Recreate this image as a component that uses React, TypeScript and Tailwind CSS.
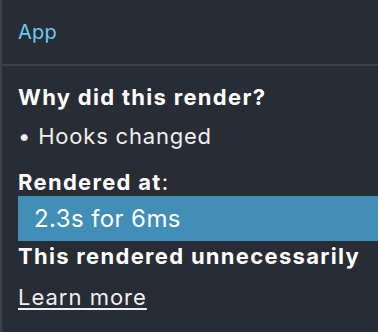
export default function App() {
  return (
    <div
      className="w-[378px] h-[332px] bg-[#282c34] border-l-2 border-[#3d424a] text-white overflow-hidden"
      style={{ fontFamily: "Inter, 'Noto Sans', sans-serif" }}
    >
      <div className="h-[66px] border-b-2 border-[#3d424a] px-4 flex items-center">
        <span className="text-[20px] text-[#6ccbf0] leading-none tracking-[0.2px]">App</span>
      </div>
      <div className="pl-4 pt-[18px]">
        <div className="text-[22px] font-bold leading-[26px] tracking-[1.3px]">Why did this render?</div>
        <div className="text-[22px] leading-[26px] mt-[13px] text-[#f0f0f0] tracking-[0.8px]">
          • Hooks changed
        </div>
        <div className="text-[22px] font-bold leading-[26px] mt-[20px] tracking-[1.3px]">
          Rendered at<span className="font-normal">:</span>
        </div>
        <div className="h-[45px] mt-[1px] bg-[#418fb6] pl-4 flex items-center text-[24px] tracking-[0.4px]">
          2.3s for 6ms
        </div>
        <div className="text-[22px] font-bold leading-[26px] mt-[2px] tracking-[1.3px]">
          This rendered unnecessarily
        </div>
        <div className="mt-[15px]">
          <a className="text-[22px] leading-[26px] underline underline-offset-[3px] text-[#f0f0f0] tracking-[1px]">
            Learn more
          </a>
        </div>
      </div>
    </div>
  );
}
